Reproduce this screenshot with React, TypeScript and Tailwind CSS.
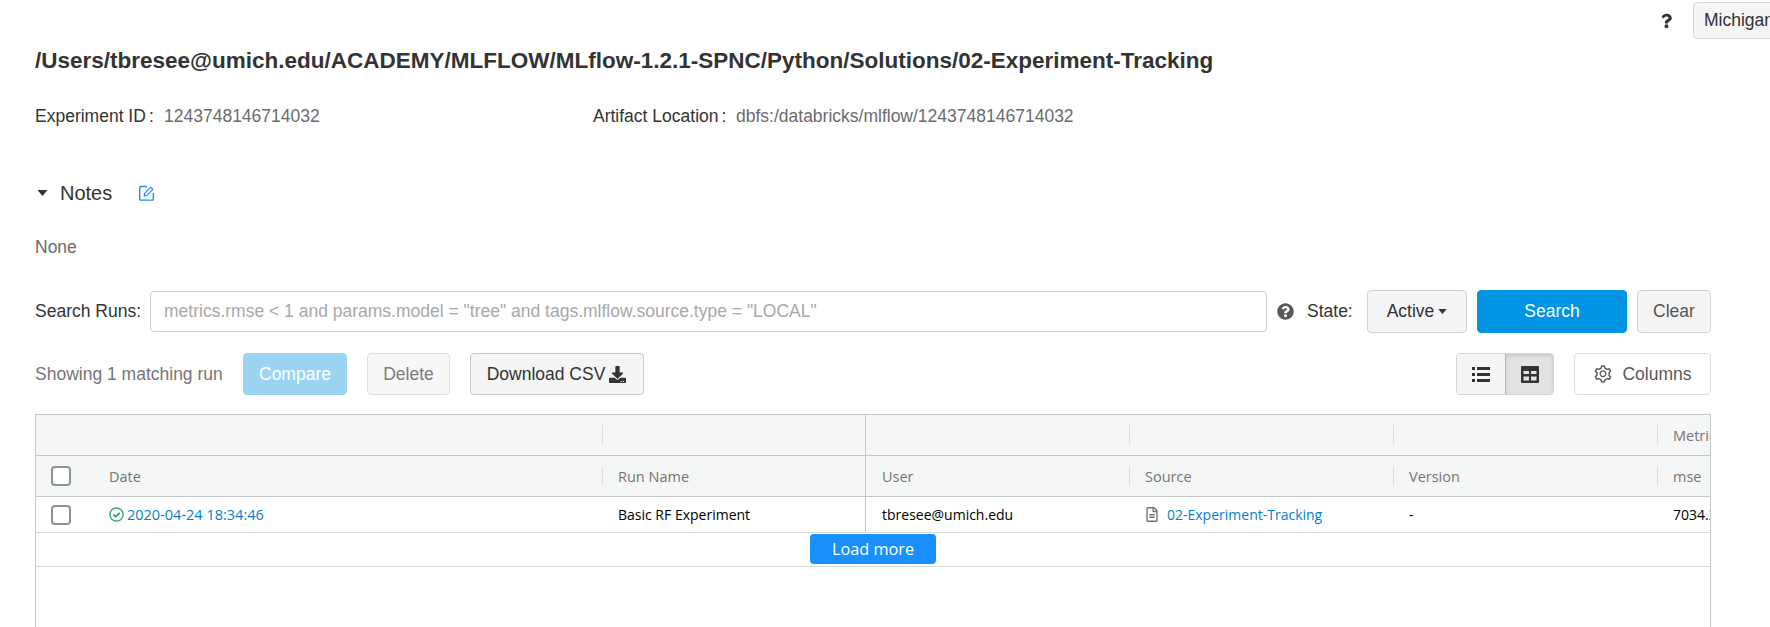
import { FaQuestion, FaQuestionCircle, FaDownload, FaRegFileAlt } from "react-icons/fa";
import { AiOutlineSetting } from "react-icons/ai";

const btn = "flex items-center justify-center rounded-[4px] border text-[17.5px]";
const cols = "grid grid-cols-[567px_263px_264px_264px_264px_52px]";
const headDivider = "relative after:absolute after:right-0 after:top-[10px] after:h-[20px] after:w-px after:bg-[#dcdfdf]";

function HeadCell({ label, pad = "pl-[15px]", divider = true, strong = false }: { label?: string; pad?: string; divider?: boolean; strong?: boolean }) {
  return (
    <div className={`flex h-[40px] items-center overflow-hidden whitespace-nowrap pt-[1px] text-[#757575] ${pad} ${strong ? "border-r border-[#c4c7c7]" : divider ? headDivider : ""}`}>
      {label}
    </div>
  );
}

function Caret({ className }: { className: string }) {
  return (
    <svg viewBox="0 0 10 6" className={className} aria-hidden="true">
      <path d="M0 0h10L5 6z" fill="currentColor" />
    </svg>
  );
}

function EditIcon() {
  return (
    <svg viewBox="0 0 16 16" className="ml-[27px] h-[16px] w-[16px] text-[#1890ff]" fill="none" stroke="currentColor" aria-hidden="true">
      <path d="M8 1.5H1.5a.8.8 0 0 0-.8.8v12a.8.8 0 0 0 .8.8h12a.8.8 0 0 0 .8-.8V8" strokeWidth="1.4" />
      <path d="M5.2 11l.5-2.8 6-6 2.2 2.2-6 6z" strokeWidth="1.2" strokeLinejoin="round" />
    </svg>
  );
}

function ListIcon() {
  return (
    <svg viewBox="0 0 18 15" className="h-[15px] w-[18px] text-[#333]" aria-hidden="true">
      <path d="M0 0h3v3H0zM5 0h13v3H5zM0 6h3v3H0zM5 6h13v3H5zM0 12h3v3H0zM5 12h13v3H5z" fill="currentColor" />
    </svg>
  );
}

function TableIcon() {
  return (
    <svg viewBox="0 0 18 17" className="h-[17px] w-[18px] text-[#333]" aria-hidden="true">
      <path fillRule="evenodd" d="M1 0h16a1 1 0 0 1 1 1v15a1 1 0 0 1-1 1H1a1 1 0 0 1-1-1V1a1 1 0 0 1 1-1zM2.5 5v3h5.5V5zM10 5v3h5.5V5zM2.5 10.5v4h5.5v-4zM10 10.5v4h5.5v-4z" fill="currentColor" />
    </svg>
  );
}

function CheckIcon() {
  return (
    <svg viewBox="0 0 15 15" className="ml-[38px] h-[15px] w-[15px]" fill="none" aria-hidden="true">
      <circle cx="7.5" cy="7.5" r="6.6" stroke="#2fb56f" strokeWidth="1.5" />
      <path d="M4.5 7.6l2.2 2.2 3.9-4" stroke="#1f8a55" strokeWidth="1.5" />
    </svg>
  );
}

export default function App() {
  return (
    <div className="h-[627px] w-[1770px] overflow-hidden bg-white pl-[35px] pr-[59px] font-['Liberation_Sans',sans-serif] text-[17.5px] text-[#333]">
      <div className="mt-px flex h-[38px] items-center justify-end pt-px">
        <FaQuestion className="mr-[21px] h-[16px] w-[11px] text-[#333]" />
        <div className="-mr-[82px] flex h-[37px] w-[100px] shrink-0 items-center rounded-[4px] border border-[#d9d9d9] bg-[#f5f5f5] pl-[10px] text-[#333]">
          Michigan
        </div>
      </div>

      <h1 className="mt-[9px] whitespace-nowrap text-[22.5px] font-bold leading-[26px] text-[#333]">
        /Users/tbresee@umich.edu/ACADEMY/MLFLOW/MLflow-1.2.1-SPNC/Python/Solutions/02-Experiment-Tracking
      </h1>

      <div className="mt-[32px] flex h-[20px] items-center leading-[20px]">
        <div className="flex w-[558px]">
          <span className="w-[129px]">Experiment ID<span className="ml-[3px]">:</span></span>
          <span className="text-[#6b6b6b]">1243748146714032</span>
        </div>
        <div className="flex">
          <span className="w-[143px]">Artifact Location<span className="ml-[3px]">:</span></span>
          <span className="text-[#6b6b6b]">dbfs:/databricks/mlflow/1243748146714032</span>
        </div>
      </div>

      <div className="mt-[55px] flex h-[24px] items-center">
        <Caret className="ml-[2px] h-[6px] w-[11px] text-[#333]" />
        <span className="ml-[12px] text-[20px]">Notes</span>
        <EditIcon />
      </div>

      <div className="mt-[32px] h-[20px] leading-[20px] text-[#6b6b6b]">None</div>

      <div className="mt-[33px] flex h-[43px] items-center">
        <span className="w-[115px] shrink-0">Search Runs:</span>
        <input
          readOnly
          placeholder={'metrics.rmse < 1 and params.model = "tree" and tags.mlflow.source.type = "LOCAL"'}
          className="h-[41px] w-[1117px] shrink-0 rounded-[4px] border border-[#cccccc] bg-white px-[13px] text-[17.5px] outline-none placeholder:text-[#a8a8a8]"
        />
        <FaQuestionCircle className="ml-[10px] h-[17px] w-[17px] shrink-0 text-[#595959]" />
        <span className="ml-[13px] w-[60px] shrink-0">State:</span>
        <div className={`${btn} h-[43px] w-[100px] shrink-0 border-[#d2d2d2] bg-[#f5f5f5]`}>
          Active
          <Caret className="ml-[4px] h-[5px] w-[9px]" />
        </div>
        <div className={`${btn} ml-[10px] h-[43px] w-[150px] shrink-0 border-[#0194e2] bg-[#0194e2] text-white`}>Search</div>
        <div className={`${btn} ml-[10px] h-[43px] w-[74px] shrink-0 border-[#d2d2d2] bg-[#f5f5f5] text-[#555]`}>Clear</div>
      </div>

      <div className="mt-[20px] flex h-[42px] items-center">
        <span className="w-[208px] shrink-0 text-[#757575]">Showing 1 matching run</span>
        <div className={`${btn} h-[42px] w-[104px] border-[#9bd4f3] bg-[#9bd4f3] text-white`}>Compare</div>
        <div className={`${btn} ml-[20px] h-[42px] w-[83px] border-[#dedede] bg-[#f8f8f8] text-[#7b7b7b]`}>Delete</div>
        <div className={`${btn} ml-[20px] h-[42px] w-[174px] border-[#c8c8c8] bg-[#f5f5f5] pr-[1px]`}>
          Download CSV
          <FaDownload className="ml-[4px] h-[17px] w-[17px]" />
        </div>
        <div className="ml-auto flex h-[42px] w-[98px] overflow-hidden rounded-[4px] border border-[#d2d2d2]">
          <div className="flex w-[48px] items-center justify-center bg-[#f5f5f5]">
            <ListIcon />
          </div>
          <div className="flex flex-1 items-center justify-center border-l border-[#b5b5b5] bg-[#e3e3e3] shadow-[inset_0_2px_4px_rgba(0,0,0,0.12)]">
            <TableIcon />
          </div>
        </div>
        <div className={`${btn} ml-[20px] h-[42px] w-[137px] border-[#dedede] bg-white text-[#595959]`}>
          <AiOutlineSetting className="mr-[9px] h-[20px] w-[20px]" />
          Columns
        </div>
      </div>

      <div className="mt-[19px] h-[300px] w-[1676px] border border-[#c4c7c7] font-['Open_Sans',sans-serif] text-[14px]">
        <div className={`${cols} border-b border-[#c4c7c7] bg-[#f5f6f6] text-[14.5px]`}>
          <HeadCell />
          <HeadCell strong />
          <HeadCell />
          <HeadCell />
          <HeadCell />
          <HeadCell label="Metrics" divider={false} />
        </div>
        <div className={`${cols} border-b border-[#c4c7c7] bg-[#f5f6f6] text-[14.5px]`}>
          <div className={`flex h-[40px] items-center ${headDivider}`}>
            <span className="ml-[15px] h-[20px] w-[20px] rounded-[4px] border-2 border-[#8b9298] bg-white" />
            <span className="ml-[38px] pt-[1px] text-[#757575]">Date</span>
          </div>
          <HeadCell label="Run Name" strong />
          <HeadCell label="User" pad="pl-[16px]" />
          <HeadCell label="Source" />
          <HeadCell label="Version" />
          <HeadCell label="mse" divider={false} />
        </div>
        <div className={`${cols} h-[36px] border-b border-[#d7dbdf] text-black`}>
          <div className="flex items-center">
            <span className="ml-[15px] h-[20px] w-[20px] rounded-[4px] border-2 border-[#8b9298] bg-white" />
            <CheckIcon />
            <span className="ml-[3px] text-[14.5px] text-[#017fcc]">2020-04-24 18:34:46</span>
          </div>
          <div className="flex items-center border-r border-[#c4c7c7] pl-[15px]">Basic RF Experiment</div>
          <div className="flex items-center pl-[16px]">tbresee@umich.edu</div>
          <div className="flex items-center pl-[16px]">
            <FaRegFileAlt className="h-[15px] w-[12px] text-[#757575]" />
            <span className="ml-[9px] text-[#017fcc]">02-Experiment-Tracking</span>
          </div>
          <div className="flex items-center pl-[15px]">-</div>
          <div className="flex items-center overflow-hidden whitespace-nowrap pl-[15px]">7034.21</div>
        </div>
        <div className="flex h-[34px] justify-center border-b border-[#d7dbdf] pt-px">
          <div className="flex h-[30px] w-[126px] items-center justify-center rounded-[4px] bg-[#1890ff] text-[16.25px] text-white">
            Load more
          </div>
        </div>
      </div>
    </div>
  );
}
